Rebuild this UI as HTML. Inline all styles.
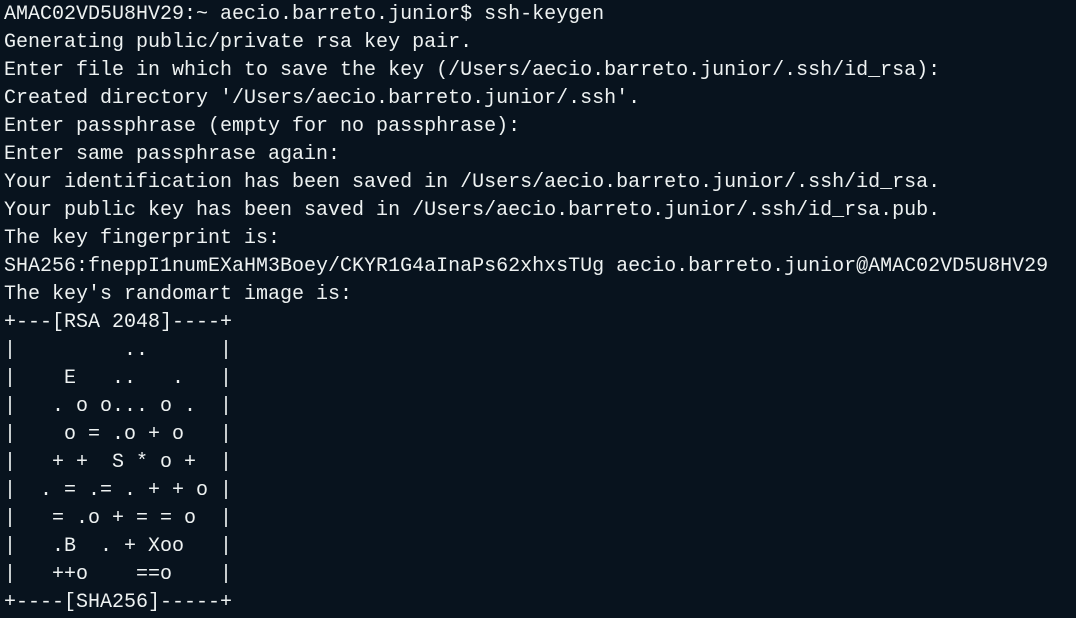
<!DOCTYPE html>
<html><head><style>
html,body{margin:0;padding:0;background:#08131e;width:1076px;height:618px;overflow:hidden}
pre{margin:0;padding:1px 0 0 4px;font-family:"Liberation Mono","DejaVu Sans Mono",monospace;font-size:20px;line-height:28px;color:#eef2f2;white-space:pre}
</style></head><body><pre>AMAC02VD5U8HV29:~ aecio.barreto.junior$ ssh-keygen
Generating public/private rsa key pair.
Enter file in which to save the key (/Users/aecio.barreto.junior/.ssh/id_rsa):
Created directory '/Users/aecio.barreto.junior/.ssh'.
Enter passphrase (empty for no passphrase):
Enter same passphrase again:
Your identification has been saved in /Users/aecio.barreto.junior/.ssh/id_rsa.
Your public key has been saved in /Users/aecio.barreto.junior/.ssh/id_rsa.pub.
The key fingerprint is:
SHA256:fneppI1numEXaHM3Boey/CKYR1G4aInaPs62xhxsTUg aecio.barreto.junior@AMAC02VD5U8HV29
The key's randomart image is:
+---[RSA 2048]----+
|         ..      |
|    E   ..   .   |
|   . o o... o .  |
|    o = .o + o   |
|   + +  S * o +  |
|  . = .= . + + o |
|   = .o + = = o  |
|   .B  . + Xoo   |
|   ++o    ==o    |
+----[SHA256]-----+</pre></body></html>
